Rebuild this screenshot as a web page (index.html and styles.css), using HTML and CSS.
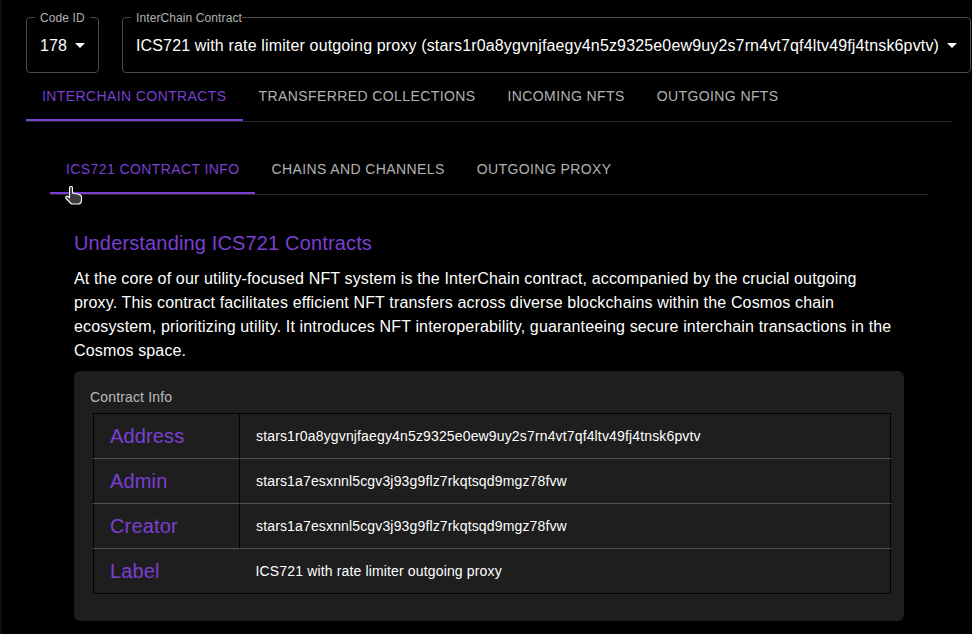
FILE: index.html
```html
<!DOCTYPE html>
<html lang="en">
<head>
<meta charset="utf-8">
<title>ICS721 Contracts</title>
<link rel="stylesheet" href="styles.css">
</head>
<body>
<main class="page">
  <div class="selects">
    <div class="select select-code">
      <span class="legend">Code ID</span>
      <span class="value">178</span>
      <svg class="caret" viewBox="0 0 10 5"><path d="M0 0h10L5 5z"/></svg>
    </div>
    <div class="select select-contract">
      <span class="legend legend-cut">InterChain Contract</span>
      <span class="value">ICS721 with rate limiter outgoing proxy (stars1r0a8ygvnjfaegy4n5z9325e0ew9uy2s7rn4vt7qf4ltv49fj4tnsk6pvtv)</span>
      <svg class="caret" viewBox="0 0 10 5"><path d="M0 0h10L5 5z"/></svg>
    </div>
  </div>
  <nav class="tabs">
    <a class="tab active">Interchain Contracts</a>
    <a class="tab">Transferred Collections</a>
    <a class="tab">Incoming NFTs</a>
    <a class="tab">Outgoing NFTs</a>
  </nav>
  <section class="panel">
    <nav class="tabs">
      <a class="tab active">ICS721 Contract Info</a>
      <a class="tab">Chains and Channels</a>
      <a class="tab">Outgoing Proxy</a>
    </nav>
    <svg class="cursor" viewBox="0 0 18 19"><path d="M4.500 1.800c0-1.800 3-1.800 3 0V7l6 1.200c1.800.4 3 1.300 3 3V14c0 2-1 3.500-2.500 4H6.500L1.200 12.500c-1.200-1.300.3-3 1.800-2l1.500 1.300z" fill="#3c3c3c" stroke="#fff" stroke-width="1.100" stroke-linejoin="round"/></svg>
    <article class="info">
      <h2 class="title">Understanding ICS721 Contracts</h2>
      <p class="intro">At the core of our utility-focused NFT system is the InterChain contract, accompanied by the crucial outgoing proxy. This contract facilitates efficient NFT transfers across diverse blockchains within the Cosmos chain ecosystem, prioritizing utility. It introduces NFT interoperability, guaranteeing secure interchain transactions in the Cosmos space.</p>
      <div class="card">
        <div class="card-label">Contract Info</div>
        <table class="table">
          <tr><th>Address</th><td>stars1r0a8ygvnjfaegy4n5z9325e0ew9uy2s7rn4vt7qf4ltv49fj4tnsk6pvtv</td></tr>
          <tr><th>Admin</th><td>stars1a7esxnnl5cgv3j93g9flz7rkqtsqd9mgz78fvw</td></tr>
          <tr><th>Creator</th><td>stars1a7esxnnl5cgv3j93g9flz7rkqtsqd9mgz78fvw</td></tr>
          <tr class="last"><th>Label</th><td>ICS721 with rate limiter outgoing proxy</td></tr>
        </table>
      </div>
    </article>
  </section>
</main>
</body>
</html>
```
FILE: styles.css
```css
* { box-sizing: border-box; }
html, body { margin: 0; height: 100%; }
body {
  background: #000;
  color: #fff;
  font-family: "Liberation Sans", Arial, sans-serif;
  letter-spacing: 0.15px;
  overflow: hidden;
  border-left: 2px solid #100a12;
}
.page { width: 926px; margin-left: 24px; padding-top: 17px; }
.selects { display: flex; gap: 23px; width: 945px; }
.select {
  position: relative;
  display: flex;
  align-items: center;
  height: 56px;
  border: 1px solid #4a4a4a;
  border-radius: 4px;
  padding: 2px 0 0 13px;
  font-size: 16px;
}
.select-code { width: 73px; flex: none; }
.select-contract { flex: 1; min-width: 0; white-space: nowrap; }
.legend {
  position: absolute;
  top: -7px;
  left: 8px;
  padding: 0 5px;
  font-size: 12px;
  line-height: 14px;
  letter-spacing: 0.1px;
  color: rgba(255, 255, 255, 0.7);
  background: #000;
}
.legend-cut { padding-right: 0; }
.caret { position: absolute; right: 13px; top: 25px; width: 10px; height: 5px; fill: #fff; }
.tabs { display: flex; border-bottom: 1px solid #262626; }
.tab {
  display: block;
  height: 48px;
  padding: 0 16px;
  line-height: 46px;
  font-size: 14px;
  letter-spacing: 0.4px;
  text-transform: uppercase;
  color: rgba(255, 255, 255, 0.7);
}
.tab.active { color: #7b3fd4; border-bottom: 2px solid #7b3fd4; }
.panel { position: relative; padding: 24px 24px 0; }
.cursor { position: absolute; left: 39px; top: 64px; width: 18px; height: 19px; }
.info { padding: 24px 24px 0; }
.title { margin: 10px 0 0; font-size: 20px; line-height: 28px; font-weight: 400; color: #7b3fd4; }
.intro { margin: 10px 0 0; max-width: 822px; font-size: 16px; line-height: 24px; }
.card {
  margin-top: 8px;
  height: 250px;
  padding: 16px 13px 0 16px;
  background: #1e1e1e;
  border-radius: 6px;
}
.card-label { font-size: 14px; line-height: 20px; color: rgba(255, 255, 255, 0.7); }
.table { width: 798px; margin: 6px 0 0 3px; border-collapse: collapse; border: 1px solid #000; }
.table th, .table td { height: 45px; border-bottom: 1px solid #515151; padding: 0 16px; text-align: left; font-weight: 400; }
.table th { width: 146px; font-size: 20px; color: #7b3fd4; border-right: 1px solid #000; }
.table td { font-size: 14px; }
.last th, .last td { border-bottom: 0; }
.last th { border-right: 0; }
```
